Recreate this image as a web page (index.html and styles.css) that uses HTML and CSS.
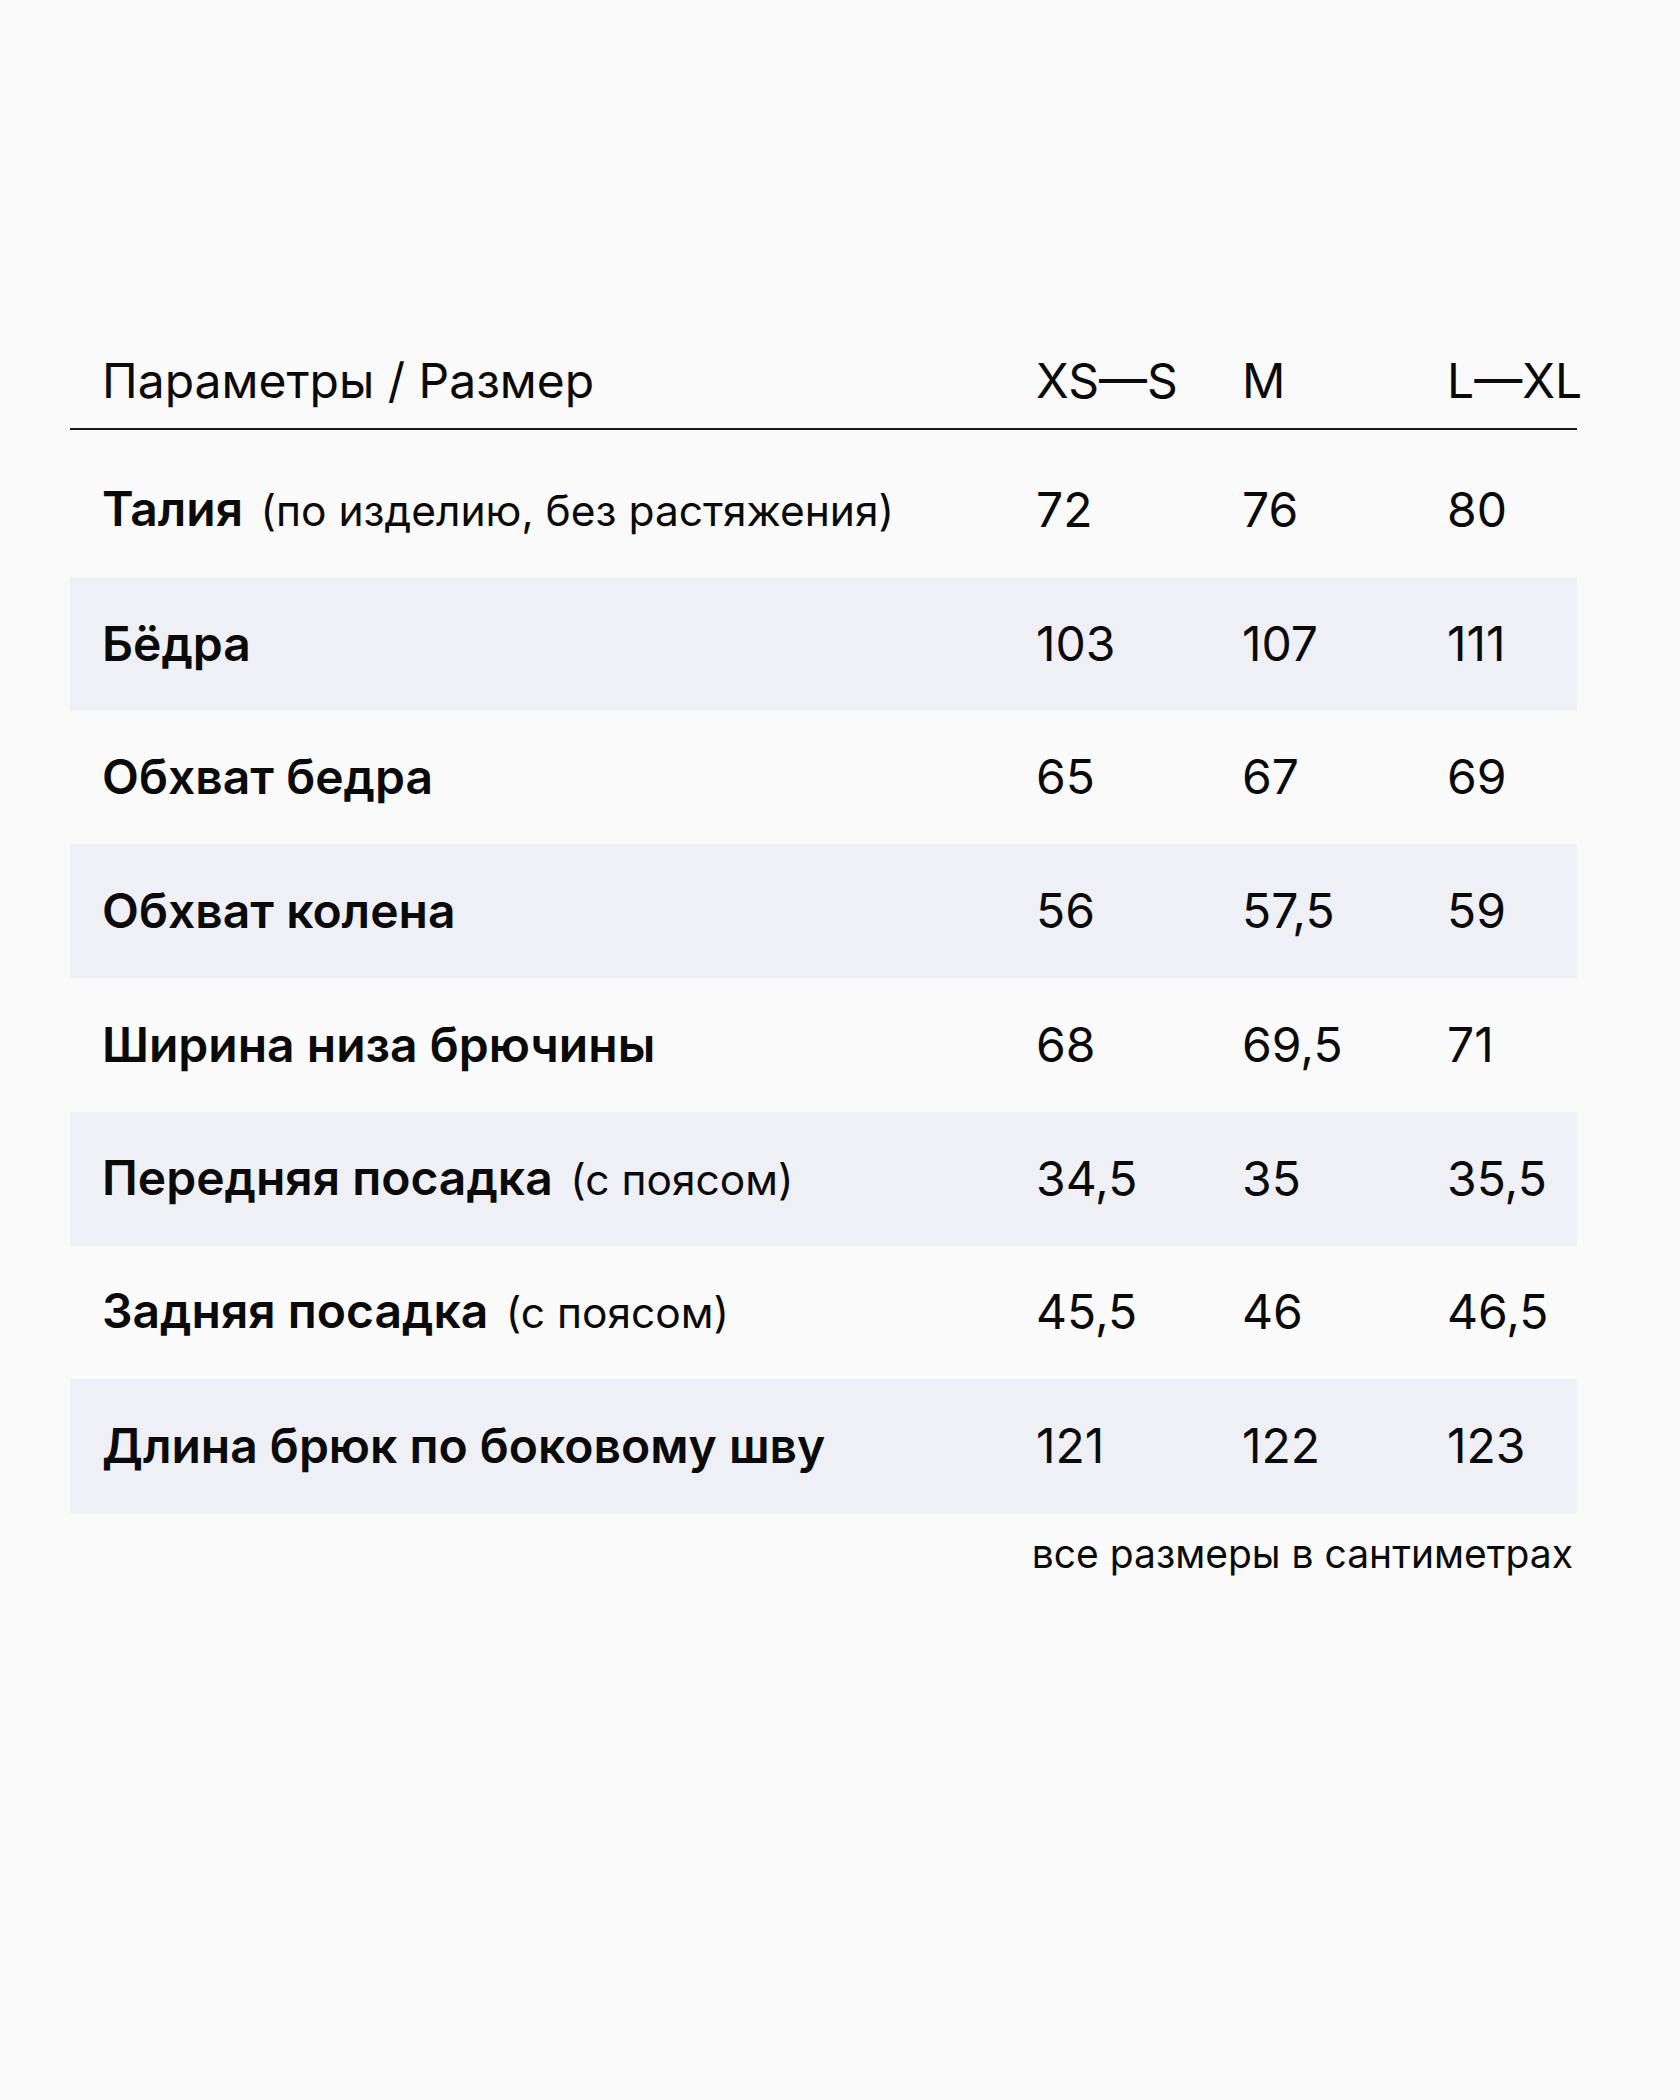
FILE: index.html
```html
<!DOCTYPE html>
<html lang="ru">
<head>
<meta charset="utf-8">
<title>Таблица размеров</title>
<link rel="stylesheet" href="styles.css">
</head>
<body>
<main class="page">
  <section class="size-table">
    <div class="row head">
      <div class="cell label">Параметры / Размер</div>
      <div class="cell">XS—S</div>
      <div class="cell">M</div>
      <div class="cell">L—XL</div>
    </div>
    <div class="body">
      <div class="row">
        <div class="cell label"><b>Талия</b> <span class="note">(по изделию, без растяжения)</span></div>
        <div class="cell">72</div><div class="cell">76</div><div class="cell">80</div>
      </div>
      <div class="row alt">
        <div class="cell label"><b>Бёдра</b></div>
        <div class="cell">103</div><div class="cell">107</div><div class="cell">111</div>
      </div>
      <div class="row">
        <div class="cell label"><b>Обхват бедра</b></div>
        <div class="cell">65</div><div class="cell">67</div><div class="cell">69</div>
      </div>
      <div class="row alt">
        <div class="cell label"><b>Обхват колена</b></div>
        <div class="cell">56</div><div class="cell">57,5</div><div class="cell">59</div>
      </div>
      <div class="row">
        <div class="cell label"><b>Ширина низа брючины</b></div>
        <div class="cell">68</div><div class="cell">69,5</div><div class="cell">71</div>
      </div>
      <div class="row alt">
        <div class="cell label"><b>Передняя посадка</b> <span class="note">(с поясом)</span></div>
        <div class="cell">34,5</div><div class="cell">35</div><div class="cell">35,5</div>
      </div>
      <div class="row">
        <div class="cell label"><b>Задняя посадка</b> <span class="note">(с поясом)</span></div>
        <div class="cell">45,5</div><div class="cell">46</div><div class="cell">46,5</div>
      </div>
      <div class="row alt">
        <div class="cell label"><b>Длина брюк по боковому шву</b></div>
        <div class="cell">121</div><div class="cell">122</div><div class="cell">123</div>
      </div>
    </div>
    <p class="footnote">все размеры в сантиметрах</p>
  </section>
</main>
</body>
</html>
```

FILE: styles.css
```css
html, body {
  margin: 0;
  padding: 0;
}
body {
  background: #fafafa;
  color: #0a0a0a;
  font-family: Inter, "Noto Sans", "Liberation Sans", sans-serif;
  width: 1680px;
  height: 2100px;
}
.page {
  padding-top: 352px;
  padding-left: 70px;
}
.size-table {
  width: 1507px;
}
.row {
  display: grid;
  grid-template-columns: 966px 206px 205px 1fr;
  align-items: center;
  height: 133.75px;
  font-size: 48px;
  line-height: 58px;
  white-space: nowrap;
}
.row.head {
  height: auto;
  padding-bottom: 18px;
  border-bottom: 2px solid #1a1a1a;
}
.body {
  margin-top: 13px;
}
.row.alt {
  background: #eff0f5;
}
.label {
  padding-left: 32px;
}
.label b {
  font-weight: 600;
}
.note {
  font-size: 42.5px;
  margin-left: 4px;
}
.footnote {
  margin: 18px 4px 0 0;
  text-align: right;
  font-size: 39px;
  line-height: 46px;
}
```
